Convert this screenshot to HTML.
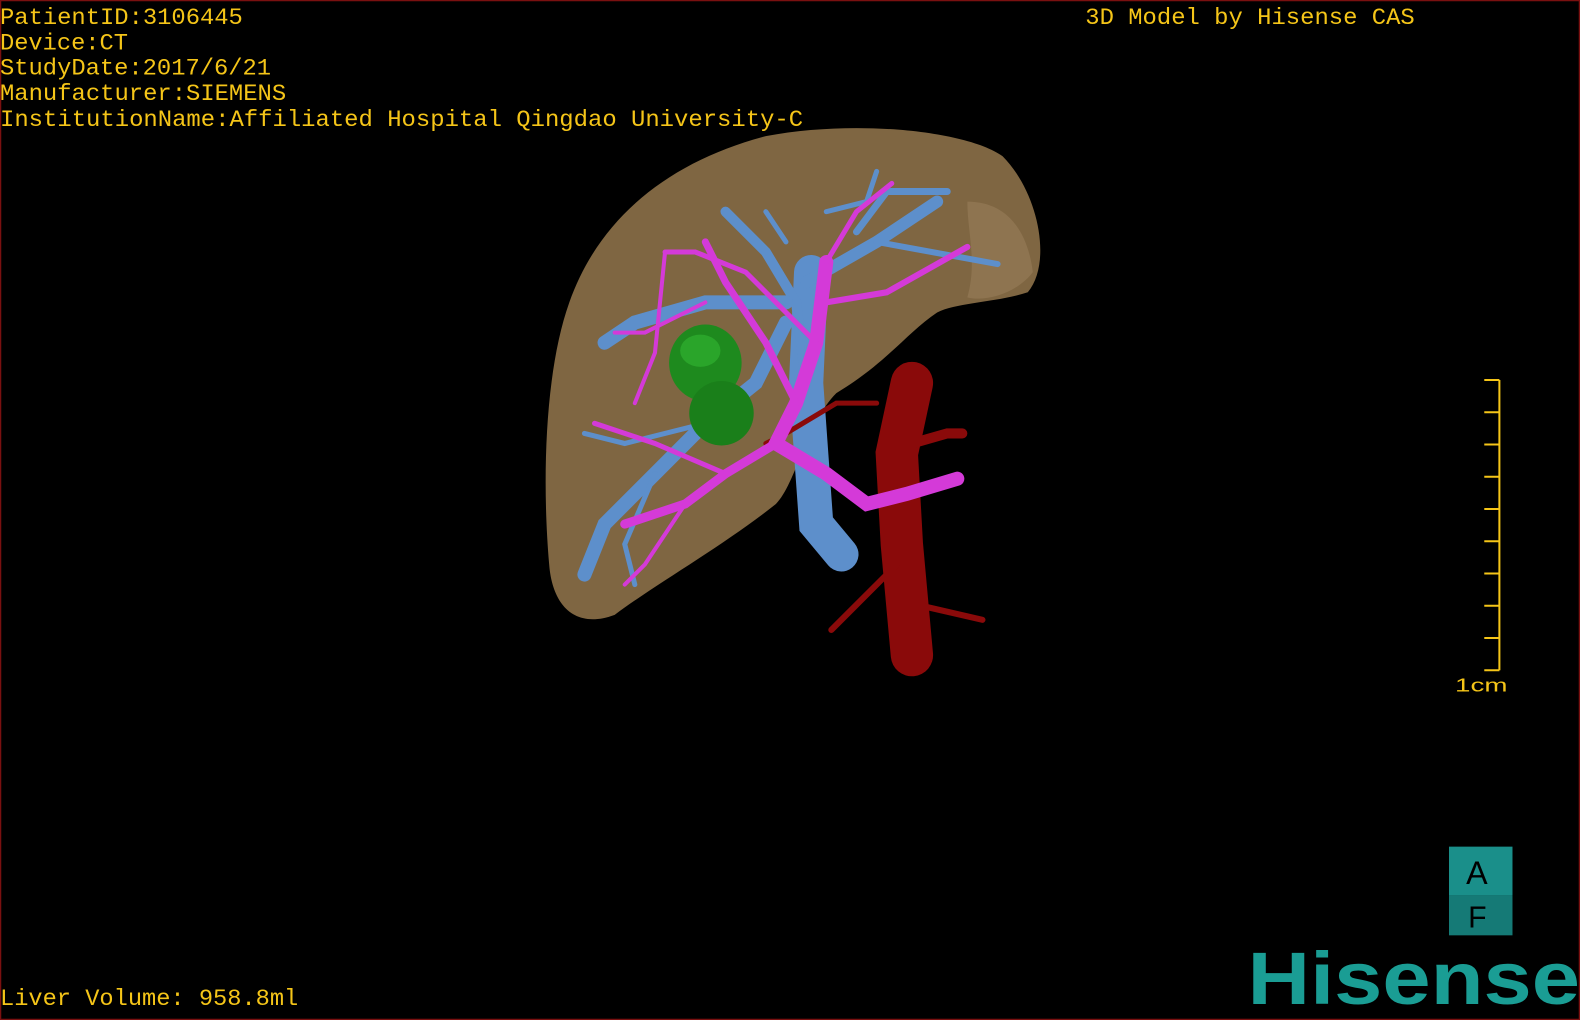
<!DOCTYPE html>
<html><head><meta charset="utf-8"><style>
html,body{margin:0;padding:0;background:#000;width:1580px;height:1020px;overflow:hidden}
svg{display:block}
text{font-family:"Liberation Mono","DejaVu Sans Mono",monospace;fill:#f5c518}
</style></head><body>
<svg width="1580" height="1020" viewBox="0 0 1568 1012" preserveAspectRatio="none" xmlns="http://www.w3.org/2000/svg">
<rect x="0" y="0" width="1568" height="1012" fill="#000"/>
<rect x="0.5" y="0.5" width="1567" height="1011" fill="none" stroke="#7a1010" stroke-width="1.5"/>
<g font-size="23">
<text x="0" y="24" textLength="241" lengthAdjust="spacingAndGlyphs">PatientID:3106445</text>
<text x="0" y="49" textLength="127" lengthAdjust="spacingAndGlyphs">Device:CT</text>
<text x="0" y="74" textLength="269" lengthAdjust="spacingAndGlyphs">StudyDate:2017/6/21</text>
<text x="0" y="99" textLength="284" lengthAdjust="spacingAndGlyphs">Manufacturer:SIEMENS</text>
<text x="0" y="125" textLength="797" lengthAdjust="spacingAndGlyphs">InstitutionName:Affiliated Hospital Qingdao University-C</text>
<text x="1077" y="24" textLength="327" lengthAdjust="spacingAndGlyphs">3D Model by Hisense CAS</text>
<text x="0" y="997" textLength="296" lengthAdjust="spacingAndGlyphs">Liver Volume: 958.8ml</text>
</g>
<!-- liver -->
<path d="M565 300 C595 215 665 160 760 135 C850 118 960 130 995 155 C1030 190 1045 260 1020 290 C990 300 950 300 930 310 C900 330 880 360 830 390 C800 420 790 480 770 500 C720 540 650 580 610 610 C570 625 548 600 545 560 C538 480 540 370 565 300 Z" fill="#7f6642"/>
<path d="M960 200 C1000 200 1020 230 1025 270 C1010 290 980 300 960 295 C970 260 960 230 960 200Z" fill="#8e7450"/>
<!-- blue vessels -->
<g stroke="#5d8fcb" fill="none" stroke-linecap="round">
<path d="M805 270 L800 380 L810 520 L835 550" stroke-width="34"/>
<path d="M800 380 L790 300 L760 250 L720 210" stroke-width="10"/>
<path d="M800 280 L870 240 L930 200" stroke-width="12"/>
<path d="M870 240 L990 262" stroke-width="6"/>
<path d="M850 230 L880 190 L940 190" stroke-width="7"/>
<path d="M780 300 L700 300 L630 320 L600 340" stroke-width="14"/>
<path d="M780 320 L750 380 L700 420 L650 470 L600 520 L580 570" stroke-width="14"/>
<path d="M700 420 L620 440 L580 430" stroke-width="5"/>
<path d="M650 470 L620 540 L630 580" stroke-width="5"/>
<path d="M820 210 L860 200 L870 170" stroke-width="5"/>
<path d="M760 210 L780 240" stroke-width="5"/>
</g>
<!-- red vessels -->
<g stroke="#8a0a0a" fill="none" stroke-linecap="round">
<path d="M905 380 L890 450 L895 540 L905 650" stroke-width="42"/>
<path d="M905 440 L940 430 L955 430" stroke-width="10"/>
<path d="M890 560 L840 610 L825 625" stroke-width="6"/>
<path d="M910 600 L975 615" stroke-width="6"/>
<path d="M870 400 L830 400 L780 430 L760 440" stroke-width="5"/>
</g>
<!-- magenta vessels -->
<g stroke="#d43ad8" fill="none" stroke-linecap="round">
<path d="M820 260 L810 340 L790 400 L770 440 L820 470 L860 500 L900 490 L950 475" stroke-width="14"/>
<path d="M770 440 L720 470 L680 500 L620 520" stroke-width="9"/>
<path d="M790 400 L760 340 L720 280 L700 240" stroke-width="7"/>
<path d="M820 300 L880 290 L960 245" stroke-width="6"/>
<path d="M820 260 L850 210 L885 182" stroke-width="5"/>
<path d="M810 340 L740 270 L690 250 L660 250" stroke-width="5"/>
<path d="M720 470 L650 440 L590 420" stroke-width="5"/>
<path d="M680 500 L640 560 L620 580" stroke-width="4"/>
<path d="M700 300 L640 330 L610 330" stroke-width="4"/>
<path d="M660 250 L650 350 L630 400" stroke-width="4"/>
</g>
<!-- green tumor -->
<ellipse cx="700" cy="360" rx="36" ry="38" fill="#1e8a1e"/>
<ellipse cx="716" cy="410" rx="32" ry="32" fill="#1a7f1a"/>
<ellipse cx="695" cy="348" rx="20" ry="16" fill="#2aa52a"/>
<!-- scale bar -->
<g stroke="#f5c518" stroke-width="2" fill="none">
<path d="M1488 377 V665"/>
<path d="M1473 377H1488M1473 409H1488M1473 441H1488M1473 473H1488M1473 505H1488M1473 537H1488M1473 569H1488M1473 601H1488M1473 633H1488M1473 665H1488"/>
</g>
<text x="1444" y="686" font-size="18" style="font-family:'Liberation Sans',sans-serif" textLength="52" lengthAdjust="spacingAndGlyphs">1cm</text>
<!-- AF cube -->
<rect x="1438" y="840" width="63" height="48" fill="#1a8f8a"/>
<rect x="1438" y="888" width="63" height="40" fill="#157a76"/>
<text x="1455" y="877" font-size="32" style="font-family:'Liberation Sans',sans-serif;fill:#000">A</text>
<text x="1457" y="920" font-size="30" style="font-family:'Liberation Sans',sans-serif;fill:#000">F</text>
<text x="1238" y="996" font-size="74" font-weight="bold" style="font-family:'Liberation Sans',sans-serif;fill:#1a9d94" textLength="330" lengthAdjust="spacingAndGlyphs">Hisense</text>
</svg>
</body></html>
